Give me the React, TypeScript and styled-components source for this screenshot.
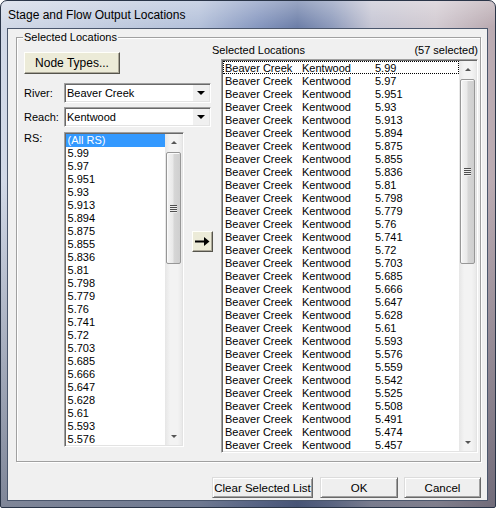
import React from 'react';
import styled, { createGlobalStyle } from 'styled-components';

const rsValues = [
  '5.99', '5.97', '5.951', '5.93', '5.913', '5.894', '5.875', '5.855', '5.836', '5.81',
  '5.798', '5.779', '5.76', '5.741', '5.72', '5.703', '5.685', '5.666', '5.647', '5.628',
  '5.61', '5.593', '5.576', '5.559', '5.542', '5.525', '5.508', '5.491', '5.474', '5.457',
];

const GlobalStyle = createGlobalStyle`
  html, body {
    margin: 0;
    padding: 0;
    background: #ffffff;
  }
  body {
    font-family: "Liberation Sans", Arial, sans-serif;
    font-size: 11px;
    color: #000;
  }
  * {
    box-sizing: border-box;
  }
`;

const Window = styled.div`
  width: 496px;
  height: 508px;
  display: flex;
  flex-direction: column;
  padding: 0 7px 6px 6px;
  border: 1px solid #2a3548;
  border-radius: 7px 7px 2px 2px;
  overflow: hidden;
  background:
    linear-gradient(180deg, rgba(255, 255, 255, 0.3) 0px, rgba(255, 255, 255, 0) 26px, rgba(0, 0, 0, 0) 180px, rgba(25, 32, 55, 0.45) 100%),
    linear-gradient(90deg, #d2d9e7 0%, #c3cde0 20%, #b4c1da 40%, #8798c0 52%, #6d7fa9 60%, #8e9bbc 67%, #c6c6d4 75%, #d2cad1 88%, #b9a9b0 100%);
`;

const TitleBar = styled.div`
  height: 27px;
  display: flex;
  align-items: center;
  padding-left: 1px;
  font-size: 12px;
  color: #000;
`;

const Client = styled.div`
  flex: 1;
  display: flex;
  flex-direction: column;
  background: #f0f0f0;
  border: 1px solid #4a566c;
`;

const GroupBox = styled.div`
  margin: 8px 6px 0 8px;
  height: 425px;
  display: flex;
  flex-direction: column;
  border: 1px solid #a0a0a0;
  box-shadow: inset 1px 1px 0 #ffffff, 1px 1px 0 #ffffff;
`;

const GroupTitle = styled.div`
  align-self: flex-start;
  margin: -7px 0 0 6px;
  padding: 0 1px;
  line-height: 13px;
  background: #f0f0f0;
`;

const GroupBody = styled.div`
  display: flex;
  padding: 0 2px 0 7px;
`;

const LeftPanel = styled.div`
  width: 189px;
  display: flex;
  flex-direction: column;
`;

const RightPanel = styled.div`
  flex: 1;
  display: flex;
  flex-direction: column;
`;

const BeigeButton = styled.div<{ w: number; h: number }>`
  width: ${({ w }) => w}px;
  height: ${({ h }) => h}px;
  display: flex;
  align-items: center;
  justify-content: center;
  background: #ecebd8;
  border: 1px solid;
  border-color: #fffffa #55544c #55544c #fffffa;
  box-shadow: inset -1px -1px 0 #aca899;
`;

const NodeTypesButton = styled(BeigeButton)`
  margin-top: 8px;
  font-size: 12px;
`;

const ArrowButton = styled(BeigeButton)`
  margin: 99px 0 0 8px;
`;

const FieldRow = styled.div<{ gap: number }>`
  display: flex;
  align-items: center;
  margin-top: ${({ gap }) => gap}px;
`;

const RsRow = styled.div`
  display: flex;
  align-items: flex-start;
  margin-top: 5px;
`;

const FieldLabel = styled.div`
  width: 40px;
  line-height: 13px;
`;

const Sunken = styled.div`
  background: #ffffff;
  border: 1px solid;
  border-color: #a0a0a0 #ffffff #ffffff #a0a0a0;
  box-shadow: inset 1px 1px 0 #696969, inset -1px -1px 0 #e3e3e3;
  padding: 1px;
`;

const Combo = styled(Sunken)`
  width: 147px;
  height: 20px;
  display: flex;
  align-items: stretch;
`;

const ComboText = styled.div`
  flex: 1;
  padding-left: 1px;
  line-height: 16px;
`;

const ComboDrop = styled.div`
  width: 16px;
  display: flex;
  align-items: center;
  justify-content: center;
  background: #f0f0f0;
`;

const DownTriangle = styled.div<{ color?: string; size?: number }>`
  width: 0;
  height: 0;
  border-left: ${({ size = 4 }) => size}px solid transparent;
  border-right: ${({ size = 4 }) => size}px solid transparent;
  border-top: ${({ size = 4 }) => size}px solid ${({ color = '#000' }) => color};
`;

const UpTriangle = styled.div`
  width: 0;
  height: 0;
  border-left: 3px solid transparent;
  border-right: 3px solid transparent;
  border-bottom: 3px solid #555;
`;

const ListBox = styled(Sunken)<{ w?: number; h: number }>`
  width: ${({ w }) => (w ? `${w}px` : 'auto')};
  height: ${({ h }) => h}px;
  display: flex;
  overflow: hidden;
`;

const Rows = styled.div`
  flex: 1;
  overflow: hidden;
`;

const RsItem = styled.div<{ selected?: boolean }>`
  height: 13px;
  line-height: 13px;
  padding-left: 2px;
  white-space: nowrap;
  background: ${({ selected }) => (selected ? '#3399ff' : 'transparent')};
  color: ${({ selected }) => (selected ? '#ffffff' : '#000000')};
`;

const LocationRow = styled.div<{ focused?: boolean }>`
  height: 13px;
  line-height: 12px;
  display: grid;
  grid-template-columns: 77px 73px 1fr;
  padding-left: 1px;
  white-space: nowrap;
  border: 1px dotted ${({ focused }) => (focused ? '#000' : 'transparent')};
`;

const Scrollbar = styled.div`
  width: 17px;
  display: flex;
  flex-direction: column;
  background: linear-gradient(90deg, #e6e6e6 0%, #f3f3f3 30%, #f3f3f3 75%, #e9e9e9 100%);
`;

const ScrollArrow = styled.div`
  height: 17px;
  flex-shrink: 0;
  display: flex;
  align-items: center;
  justify-content: center;
`;

const ScrollTrack = styled.div`
  flex: 1;
  display: flex;
  flex-direction: column;
  align-items: center;
`;

const Thumb = styled.div<{ offset: number; size: number }>`
  margin-top: ${({ offset }) => offset}px;
  width: 15px;
  height: ${({ size }) => size}px;
  border: 1px solid #979797;
  border-radius: 2px;
  background: linear-gradient(90deg, #f4f4f4 0%, #e9e9e9 45%, #d6d6d6 55%, #cfcfcf 100%);
  box-shadow: inset 1px 1px 0 #fbfbfb;
  display: flex;
  flex-direction: column;
  align-items: center;
  justify-content: center;
  gap: 1px;
`;

const Grip = styled.div`
  width: 7px;
  height: 1px;
  background: #4f4f4f;
  box-shadow: 0 1px 0 #eeeeee;
`;

const ListHeader = styled.div`
  display: flex;
  justify-content: space-between;
  line-height: 13px;
  margin-left: -1px;
`;

const LocationList = styled(ListBox)`
  margin: 2px 0 0 8px;
`;

const ButtonRow = styled.div`
  display: flex;
  justify-content: flex-end;
  align-items: center;
  margin-top: 15px;
  padding-right: 6px;
`;

const PushButton = styled.div<{ w: number; gapLeft?: number }>`
  width: ${({ w }) => w}px;
  height: 21px;
  margin-left: ${({ gapLeft = 0 }) => gapLeft}px;
  display: flex;
  align-items: center;
  justify-content: center;
  white-space: nowrap;
  background: #efefef;
  border: 1px solid;
  border-color: #dcdcdc #696969 #696969 #dcdcdc;
  box-shadow: inset 1px 1px 0 #ffffff, inset -1px -1px 0 #a0a0a0;
  font-size: 11.5px;
`;

const ScrollBarView = ({ offset, size }: { offset: number; size: number }) => (
  <Scrollbar>
    <ScrollArrow>
      <UpTriangle />
    </ScrollArrow>
    <ScrollTrack>
      <Thumb offset={offset} size={size}>
        <Grip />
        <Grip />
        <Grip />
        <Grip />
      </Thumb>
    </ScrollTrack>
    <ScrollArrow>
      <DownTriangle color="#555" size={3} />
    </ScrollArrow>
  </Scrollbar>
);

const App = () => {
  return (
    <>
      <GlobalStyle />
      <Window>
        <TitleBar>Stage and Flow Output Locations</TitleBar>
        <Client>
          <GroupBox>
            <GroupTitle>Selected Locations</GroupTitle>
            <GroupBody>
              <LeftPanel>
                <NodeTypesButton w={96} h={22}>Node Types...</NodeTypesButton>
                <FieldRow gap={9}>
                  <FieldLabel>River:</FieldLabel>
                  <Combo>
                    <ComboText>Beaver Creek</ComboText>
                    <ComboDrop>
                      <DownTriangle />
                    </ComboDrop>
                  </Combo>
                </FieldRow>
                <FieldRow gap={4}>
                  <FieldLabel>Reach:</FieldLabel>
                  <Combo>
                    <ComboText>Kentwood</ComboText>
                    <ComboDrop>
                      <DownTriangle />
                    </ComboDrop>
                  </Combo>
                </FieldRow>
                <RsRow>
                  <FieldLabel>RS:</FieldLabel>
                  <ListBox w={122} h={315}>
                    <Rows>
                      <RsItem selected>(All RS)</RsItem>
                      {rsValues.slice(0, 23).map((v) => (
                        <RsItem key={v}>{v}</RsItem>
                      ))}
                    </Rows>
                    <ScrollBarView offset={1} size={112} />
                  </ListBox>
                  <ArrowButton w={21} h={21}>
                    <svg width="15" height="9" viewBox="0 0 15 9">
                      <rect x="0" y="3.5" width="10" height="2" fill="#000" />
                      <path d="M9 0 L14.5 4.5 L9 9 Z" fill="#000" />
                    </svg>
                  </ArrowButton>
                </RsRow>
              </LeftPanel>
              <RightPanel>
                <ListHeader>
                  <span>Selected Locations</span>
                  <span>(57 selected)</span>
                </ListHeader>
                <LocationList h={394}>
                  <Rows>
                    {rsValues.map((v, i) => (
                      <LocationRow key={v} focused={i === 0}>
                        <span>Beaver Creek</span>
                        <span>Kentwood</span>
                        <span>{v}</span>
                      </LocationRow>
                    ))}
                  </Rows>
                  <ScrollBarView offset={1} size={185} />
                </LocationList>
              </RightPanel>
            </GroupBody>
          </GroupBox>
          <ButtonRow>
            <PushButton w={101}>Clear Selected List</PushButton>
            <PushButton w={78} gapLeft={7}>OK</PushButton>
            <PushButton w={77} gapLeft={6}>Cancel</PushButton>
          </ButtonRow>
        </Client>
      </Window>
    </>
  );
};

export default App;
